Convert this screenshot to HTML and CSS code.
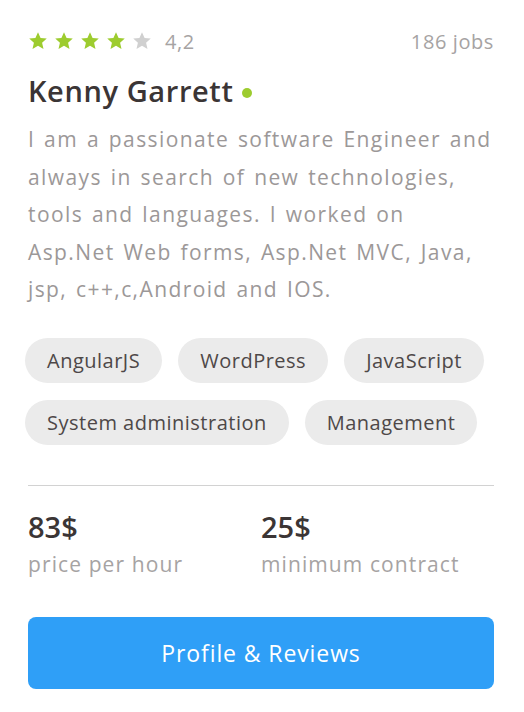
FILE: index.html
```html
<!DOCTYPE html>
<html lang="en">
<head>
<meta charset="utf-8">
<title>Kenny Garrett</title>
<link rel="stylesheet" href="styles.css">
</head>
<body>
<div class="card">
  <div class="top">
    <div class="rating">
      <div class="stars">
        <svg class="star on" viewBox="0 0 24 24"><path d="M12 1.5l3.1 6.9 7.4.7-5.6 5 1.7 7.4L12 17.6l-6.6 3.9 1.7-7.4-5.6-5 7.4-.7z"/></svg>
        <svg class="star on" viewBox="0 0 24 24"><path d="M12 1.5l3.1 6.9 7.4.7-5.6 5 1.7 7.4L12 17.6l-6.6 3.9 1.7-7.4-5.6-5 7.4-.7z"/></svg>
        <svg class="star on" viewBox="0 0 24 24"><path d="M12 1.5l3.1 6.9 7.4.7-5.6 5 1.7 7.4L12 17.6l-6.6 3.9 1.7-7.4-5.6-5 7.4-.7z"/></svg>
        <svg class="star on" viewBox="0 0 24 24"><path d="M12 1.5l3.1 6.9 7.4.7-5.6 5 1.7 7.4L12 17.6l-6.6 3.9 1.7-7.4-5.6-5 7.4-.7z"/></svg>
        <svg class="star off" viewBox="0 0 24 24"><path d="M12 1.5l3.1 6.9 7.4.7-5.6 5 1.7 7.4L12 17.6l-6.6 3.9 1.7-7.4-5.6-5 7.4-.7z"/></svg>
      </div>
      <span class="score">4,2</span>
    </div>
    <span class="jobs">186 jobs</span>
  </div>
  <h1 class="name">Kenny Garrett <span class="dot"></span></h1>
  <p class="bio">I am a passionate software Engineer and always in search of new technologies, tools and languages. I worked on Asp.Net Web forms, Asp.Net MVC, Java, jsp, c++,c,Android and IOS.</p>
  <div class="tags">
    <span class="tag">AngularJS</span>
    <span class="tag">WordPress</span>
    <span class="tag">JavaScript</span>
    <span class="tag">System administration</span>
    <span class="tag">Management</span>
  </div>
  <hr class="divider">
  <div class="stats">
    <div class="stat">
      <div class="value">83$</div>
      <div class="label">price per hour</div>
    </div>
    <div class="stat">
      <div class="value">25$</div>
      <div class="label">minimum contract</div>
    </div>
  </div>
  <button class="cta">Profile &amp; Reviews</button>
</div>
</body>
</html>
```

FILE: styles.css
```css
* { box-sizing: border-box; }
html, body { margin: 0; padding: 0; background: #fff; }
body { font-family: "Open Sans", "Noto Sans", sans-serif; }

.card {
  width: 524px;
  padding: 29px 30px 0 28px;
}

.top {
  display: flex;
  justify-content: space-between;
  align-items: center;
  height: 24px;
}
.rating { display: flex; align-items: center; }
.stars { display: flex; gap: 6px; }
.star { width: 20px; height: 20px; display: block; }
.star.on { fill: #9dcc2f; }
.star.off { fill: #d0d0d0; }
.score { margin-left: 13px; font-size: 20px; letter-spacing: 0.6px; color: #a6a3a3; }
.jobs { font-size: 20px; letter-spacing: 0.6px; color: #a6a3a3; }

.name {
  margin: 20px 0 0;
  font-size: 29px;
  font-weight: 600;
  letter-spacing: 0.6px;
  color: #3b3535;
  line-height: 36px;
  display: flex;
  align-items: center;
}
.dot {
  width: 10px; height: 10px; border-radius: 50%;
  background: #9dcc2f;
  margin-left: 9px;
  margin-top: 3px;
}

.bio {
  margin: 12px 0 0;
  font-size: 21px;
  line-height: 37.5px;
  letter-spacing: 1.4px;
  word-spacing: 2px;
  color: #9c9898;
}

.tags {
  margin: 29px 0 0 -3px;
  display: flex;
  flex-wrap: wrap;
  gap: 17px 16px;
}
.tag {
  height: 45px;
  line-height: 45px;
  padding: 0 22px;
  border-radius: 23px;
  background: #ebebeb;
  color: #4e4848;
  font-size: 20px;
  letter-spacing: 0.5px;
}

.divider {
  margin: 40px 0 0;
  border: 0;
  border-top: 1.5px solid #d2d2d2;
}

.stats {
  display: flex;
  margin-top: 24px;
}
.stat { width: 234px; }
.value {
  font-size: 29px;
  font-weight: 600;
  color: #3b3535;
  line-height: 34px;
}
.label {
  margin-top: 6px;
  font-size: 21px;
  letter-spacing: 1.1px;
  color: #a6a3a3;
  line-height: 28px;
}

.cta {
  display: block;
  margin-top: 39px;
  width: 100%;
  height: 72px;
  border: 0;
  border-radius: 8px;
  background: #2f9ff7;
  color: #fff;
  font-family: inherit;
  font-size: 23px;
  letter-spacing: 0.9px;
}
```
